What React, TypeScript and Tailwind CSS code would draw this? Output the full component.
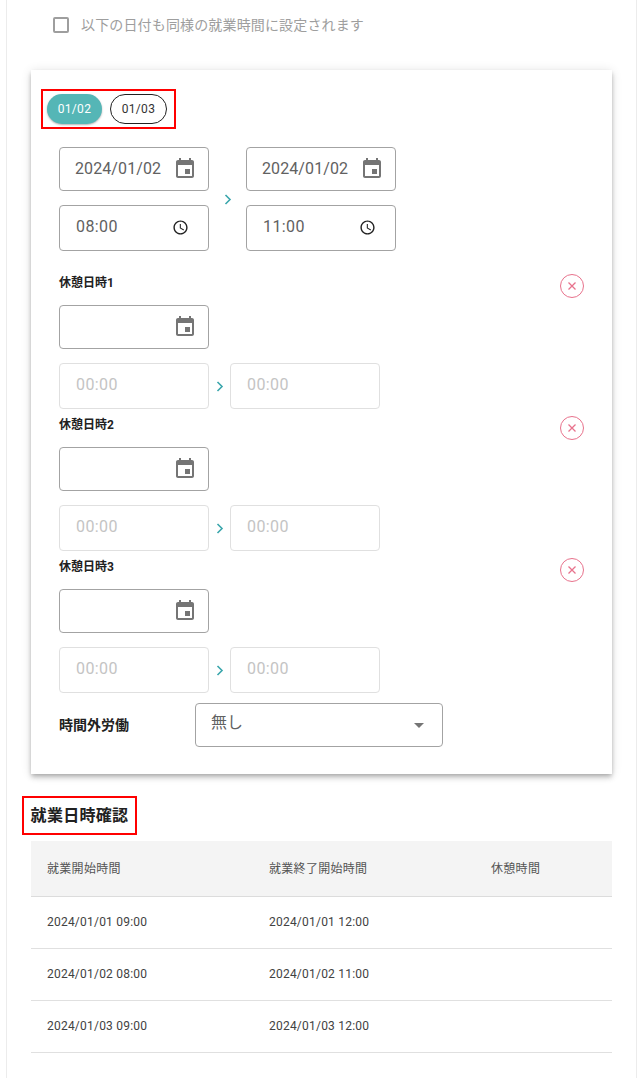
const CalendarIcon = () => (
  <svg width="24" height="24" viewBox="0 0 24 24" fill="#757575">
    <path d="M17 12h-5v5h5v-5zM16 1v2H8V1H6v2H5c-1.11 0-1.99.9-1.99 2L3 19c0 1.1.89 2 2 2h14c1.1 0 2-.9 2-2V5c0-1.1-.9-2-2-2h-1V1h-2zm3 18H5V8h14v11z" />
  </svg>
)

const ClockIcon = () => (
  <svg className="mb-[1px]" width="17" height="17" viewBox="0 0 24 24" fill="#212121">
    <path d="M11.99 2C6.47 2 2 6.48 2 12s4.47 10 9.99 10C17.52 22 22 17.52 22 12S17.52 2 11.99 2zM12 20c-4.42 0-8-3.58-8-8s3.58-8 8-8 8 3.58 8 8-3.58 8-8 8zm.5-13H11v6l5.25 3.15.75-1.23-4.5-2.67z" />
  </svg>
)

const Chevron = () => (
  <svg width="8" height="11" viewBox="0 0 8 11" fill="none" stroke="#3aa6ac" strokeWidth="1.6">
    <path d="M1.5 1l4.5 4.5-4.5 4.5" />
  </svg>
)

const DateField = ({ value }: { value?: string }) => (
  <div className="flex h-[44px] w-[150px] items-center justify-between rounded border border-[#a3a3a3] pl-[15px] pr-[11px]">
    <span className="pb-[1px] text-base tracking-[0.1px] text-[#616161]">{value}</span>
    <CalendarIcon />
  </div>
)

const TimeField = ({ value }: { value: string }) => (
  <div className="flex h-[46px] w-[150px] items-center justify-between rounded border border-[#a3a3a3] pl-[16px] pr-[19px]">
    <span className="pb-[2px] text-base tracking-[0.4px] text-[#616161]">{value}</span>
    <ClockIcon />
  </div>
)

const DisabledTime = () => (
  <div className="flex h-[46px] w-[150px] items-center rounded border border-[#e0e0e0] pl-[16px]">
    <span className="pb-[2px] text-base tracking-[0.4px] text-[#c4c4c4]">00:00</span>
  </div>
)

const BreakBlock = ({ label }: { label: string }) => (
  <div className="mt-[7px]">
    <div className="flex h-[24px] items-start justify-between pr-[28px]">
      <span className="mt-[1px] text-xs font-bold leading-[16px] text-[#212121]">{label}</span>
      <button className="flex h-[24px] w-[24px] items-center justify-center rounded-full border border-[#e8728c]">
        <svg width="10" height="10" viewBox="0 0 10 10" stroke="#e8728c" strokeWidth="1.3">
          <path d="M1.5 1.5l7 7M8.5 1.5l-7 7" />
        </svg>
      </button>
    </div>
    <div className="mt-[7px]">
      <DateField />
    </div>
    <div className="mt-[14px] flex items-center">
      <DisabledTime />
      <div className="flex w-[21px] justify-center pt-[1px]">
        <Chevron />
      </div>
      <DisabledTime />
    </div>
  </div>
)

const rows = ["2024/01/01 09:00|2024/01/01 12:00", "2024/01/02 08:00|2024/01/02 11:00", "2024/01/03 09:00|2024/01/03 12:00"]

export default function App() {
  return (
    <div className="h-[1078px] overflow-hidden bg-white font-['Roboto','Noto_Sans_CJK_JP',sans-serif]">
      <div className="ml-[6px] h-full w-[631px] border-x border-[#ececec] pl-[24px]">
        <label className="ml-[22px] flex h-[50px] items-center gap-[12px] pb-[1px]">
          <span className="h-[16px] w-[16px] rounded-[2px] border-2 border-[#9e9e9e]" />
          <span className="text-sm tracking-[0.15px] text-[#9e9e9e]">以下の日付も同様の就業時間に設定されます</span>
        </label>

        <div className="mt-[20px] h-[704px] w-[581px] bg-white pt-[19px] shadow-[0_2px_4px_-1px_rgba(0,0,0,0.2),0_4px_5px_0_rgba(0,0,0,0.14),0_1px_10px_0_rgba(0,0,0,0.12)]">
          <div className="ml-[10px] flex h-[40px] w-[135px] items-center gap-[8px] border-2 border-[#ff0000] pl-[4px]">
            <button className="h-[30px] w-[55px] rounded-full bg-[#55b6b6] text-xs tracking-[0.3px] text-white shadow-[0_1px_2px_rgba(0,0,0,0.3)]">01/02</button>
            <button className="h-[30px] w-[57px] rounded-full border border-[#212121] text-xs tracking-[0.3px] text-[#333333]">01/03</button>
          </div>

          <div className="ml-[28px]">
            <div className="mt-[18px] flex items-center">
              <div className="flex flex-col gap-[14px]">
                <DateField value="2024/01/02" />
                <TimeField value="08:00" />
              </div>
              <div className="flex w-[37px] justify-center">
                <Chevron />
              </div>
              <div className="flex flex-col gap-[14px]">
                <DateField value="2024/01/02" />
                <TimeField value="11:00" />
              </div>
            </div>

            <div className="pt-[16px]">
              <BreakBlock label="休憩日時1" />
            </div>
            <BreakBlock label="休憩日時2" />
            <BreakBlock label="休憩日時3" />

            <div className="mt-[10px] flex items-center">
              <span className="w-[136px] text-sm font-bold text-[#212121]">時間外労働</span>
              <div className="flex h-[44px] w-[248px] items-center justify-between rounded border border-[#a3a3a3] pb-[4px] pl-[15px] pr-[18px]">
                <span className="text-base text-[#616161]">無し</span>
                <span className="mt-[4px] h-0 w-0 border-x-[5px] border-t-[5px] border-x-transparent border-t-[#757575]" />
              </div>
            </div>
          </div>
        </div>

        <div className="ml-[-9px] mt-[22px] flex h-[39px] w-[115px] items-center justify-center border-2 border-[#ff0000]">
          <h2 className="text-base font-bold tracking-[0.3px] text-[#212121]">就業日時確認</h2>
        </div>

        <table className="mt-[6px] w-[581px] table-fixed border-collapse text-xs text-[#424242]">
          <thead>
            <tr className="h-[55px] border-b border-[#dcdcdc] bg-[#f4f4f4] text-left tracking-[0.3px] text-[#555555]">
              <th className="w-[222px] pl-[16px] pt-[1px] font-normal">就業開始時間</th>
              <th className="w-[222px] pl-[16px] pt-[1px] font-normal">就業終了開始時間</th>
              <th className="pl-[16px] pt-[1px] font-normal">休憩時間</th>
            </tr>
          </thead>
          <tbody>
            {rows.map((row) => (
              <tr key={row} className="h-[52px] border-b border-[#e0e0e0]">
                <td className="pl-[16px] tracking-[0.22px]">{row.split("|")[0]}</td>
                <td className="pl-[16px] tracking-[0.22px]">{row.split("|")[1]}</td>
                <td />
              </tr>
            ))}
          </tbody>
        </table>
      </div>
    </div>
  )
}
